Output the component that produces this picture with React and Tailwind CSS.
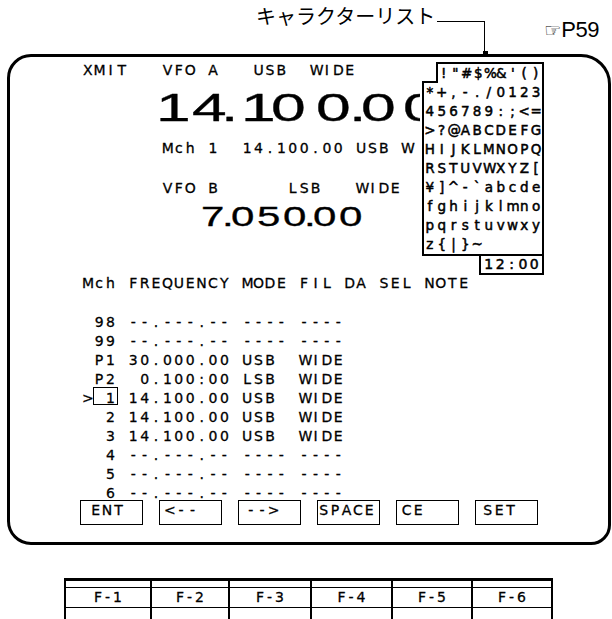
import React from "react";

const rows = [
  " 98 --.---.-- ---- ----",
  " 99 --.---.-- ---- ----",
  " P1 30.000.00 USB  WIDE",
  " P2  0.100:00 LSB  WIDE",
  null,
  "  2 14.100.00 USB  WIDE",
  "  3 14.100.00 USB  WIDE",
  "  4 --.---.-- ---- ----",
  "  5 --.---.-- ---- ----",
  "  6 --.---.-- ---- ----",
];

const charRows = [
  "*+,-./0123",
  "456789:;<=",
  ">?@ABCDEFG",
  "HIJKLMNOPQ",
  "RSTUVWXYZ[",
  "¥]^-`abcde",
  "fghijklmno",
  "pqrstuvwxy",
  "z{|}~",
];

const buttons = [
  { t: "ENT", pl: "pl-[9px]" },
  { t: "<--", pl: "pl-[4px]" },
  { t: "-->", pl: "pl-[6px]" },
  { t: "SPACE", pl: "pl-[0px]" },
  { t: "CE", pl: "pl-[4px]" },
  { t: "SET", pl: "pl-[6px]" },
];

// big digits: [char, cell width]
const bigA = [
  ["1", 36],
  ["4", 29],
  [".", 20],
  ["1", 30],
  ["0", 45],
  ["0", 33],
  [".", 12],
  ["0", 42],
];

const bigB = [
  ["7", 21],
  [".", 9],
  ["0", 26],
  ["5", 26],
  ["0", 21],
  [".", 9],
  ["0", 26],
  ["0", 26],
];

function Mono({ text, className = "" }) {
  return (
    <div className={"flex whitespace-pre " + className}>
      {[...text].map((c, i) => (
        <span key={i} className="w-[11.4px] shrink-0 text-center">
          {c}
        </span>
      ))}
    </div>
  );
}

function CharList() {
  return (
    <div className="absolute left-[412px] top-[5px] w-[122px] text-[13.5px] leading-[19px] [-webkit-text-stroke:0.5px_black]">
      <div className="relative z-10 ml-[14px] h-[21px] -mb-[2px] flex border-2 border-b-0 border-black bg-white whitespace-pre">
        {[..."!\"#$%&'()"].map((c, i) => (
          <span key={i} className="w-[11.5px] shrink-0 text-center">
            {c}
          </span>
        ))}
      </div>
      <div className="border-2 border-black bg-white">
        {charRows.map((r, j) => (
          <div key={j} className="flex whitespace-pre">
            {[...r].map((c, i) => (
              <span key={i} className="w-[11.8px] shrink-0 text-center">
                {c}
              </span>
            ))}
          </div>
        ))}
      </div>
      <div className="ml-auto w-[65px] h-[19px] flex justify-center border-2 border-t-0 border-black bg-white text-[14px] leading-[17px]">
        <Mono text="12:00" />
      </div>
    </div>
  );
}

export default function App() {
  return (
    <div className="w-[612px] h-[619px] overflow-hidden bg-white text-black font-['DejaVu_Sans',sans-serif] text-[14px] leading-[19px] [-webkit-text-stroke:0.3px_black]">
      {/* callout */}
      <div className="flex items-start h-[54px]">
        <div className="ml-[256px] mt-[6px] text-[20px] leading-[20px] font-['Noto_Sans_CJK_JP',sans-serif] whitespace-nowrap [-webkit-text-stroke:0px]">
          キャラクターリスト
        </div>
        <div className="relative ml-[2px] mt-[21px] w-[48px] h-[33px] border-t-[1.5px] border-r-[1.5px] border-black">
          <span className="absolute -right-[3.5px] -bottom-[2px] w-[5px] h-[5px] bg-black" />
        </div>
        <div className="ml-[59px] mt-[19px] flex items-baseline leading-[22px] [-webkit-text-stroke:0px]">
          <span className="text-[19px]">☞</span>
          <span className="font-['Liberation_Sans',sans-serif] text-[22px] tracking-[-0.5px]">P59</span>
        </div>
      </div>

      {/* screen */}
      <div className="relative ml-[7px] w-[604px] h-[491px] border-[3px] border-black rounded-[24px] rounded-tr-[30px] rounded-br-[20px] pl-[72px] pt-[4px]">
        <Mono text="XMIT   VFO A   USB  WIDE" />

        <div className="mt-[8.4px] ml-[74px] flex h-[40px] leading-[40px] text-[39px] font-['Liberation_Sans',sans-serif]">
          {bigA.map(([c, w], i) => (
            <span key={i} className="shrink-0" style={{ width: w }}>
              <span className="inline-block origin-left scale-x-[1.6]">{c}</span>
            </span>
          ))}
          {/* last digit runs under the character list */}
          <span className="shrink-0 w-[17px] overflow-hidden">
            <span className="inline-block origin-left scale-x-[1.6]">0</span>
          </span>
        </div>

        <Mono className="mt-[10.6px]" text="       Mch 1  14.100.00 USB W" />
        <Mono className="mt-[21px]" text="       VFO B      LSB   WIDE" />

        <div className="mt-[5.3px] ml-[119px] flex h-[28px] leading-[28px] text-[28px] font-['Liberation_Sans',sans-serif]">
          {bigB.map(([c, w], i) => (
            <span key={i} className="shrink-0" style={{ width: w }}>
              <span className="inline-block origin-left scale-x-150">{c}</span>
            </span>
          ))}
        </div>

        <Mono className="mt-[42.7px]" text="Mch FREQUENCY MODE FIL DA SEL NOTE" />

        <div className="mt-[20px]">
          {rows.map((r, i) =>
            r ? (
              <Mono key={i} text={r} />
            ) : (
              <div key={i} className="flex whitespace-pre">
                <span className="w-[11.4px] shrink-0 text-center">{">"}</span>
                <span className="relative flex">
                  <span className="w-[11.4px] shrink-0 text-center"> </span>
                  <span className="w-[11.4px] shrink-0 text-center">1</span>
                  <span className="absolute -left-[0.5px] -right-[2px] -top-[2px] bottom-[3px] border-[1.5px] border-black" />
                </span>
                <Mono text=" 14.100.00 USB  WIDE" />
              </div>
            )
          )}
        </div>

        <div className="-mt-[3px] -ml-[2px] flex gap-[16px]">
          {buttons.map((b) => (
            <div
              key={b.t}
              className={"w-[63px] h-[25px] border-[1.5px] border-black flex items-start " + b.pl}
            >
              <Mono text={b.t} />
            </div>
          ))}
        </div>

        <CharList />
      </div>

      {/* function keys */}
      <div className="ml-[64px] mt-[33px] w-[489px] grid grid-cols-[86px_78px_82px_81px_80px_1fr] border-t-[3px] border-l-2 border-black">
        {["F-1", "F-2", "F-3", "F-4", "F-5", "F-6"].map((k) => (
          <div key={k} className="flex flex-col border-r-2 border-black">
            <div className="h-[7px] border-b-[1.5px] border-black" />
            <div className="h-[20px] flex items-center justify-center pl-[3px] tracking-[3px] border-b-[1.5px] border-black">
              {k}
            </div>
            <div className="h-[15px]" />
          </div>
        ))}
      </div>
    </div>
  );
}
